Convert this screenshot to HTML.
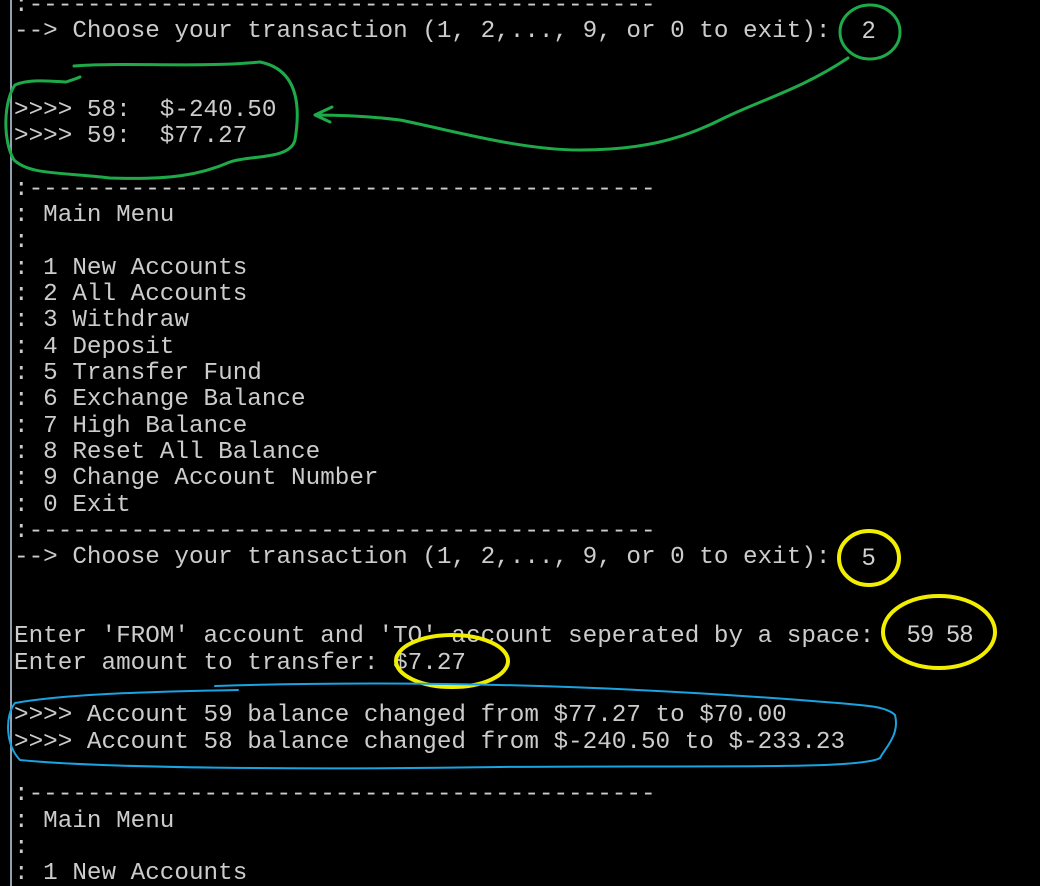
<!DOCTYPE html>
<html><head><meta charset="utf-8"><style>
html,body{margin:0;padding:0;background:#000;width:1040px;height:886px;overflow:hidden;position:relative}
pre{position:absolute;left:14px;top:-7.5px;margin:0;font-family:"Liberation Mono",monospace;font-size:24.3px;line-height:26.33px;color:#cccccc;letter-spacing:0}
.bar{position:absolute;left:10px;top:0;width:2px;height:886px;background:#8fa0b0}
.p{position:absolute;font-family:"Liberation Sans",sans-serif;color:#d0d0d0;font-size:24px;word-spacing:6px}
svg{position:absolute;left:0;top:0}
</style></head><body>
<div class="bar"></div>
<pre>:-------------------------------------------
--&gt; Choose your transaction (1, 2,..., 9, or 0 to exit): 


&gt;&gt;&gt;&gt; 58:  $-240.50
&gt;&gt;&gt;&gt; 59:  $77.27

:-------------------------------------------
: Main Menu
:
: 1 New Accounts
: 2 All Accounts
: 3 Withdraw
: 4 Deposit
: 5 Transfer Fund
: 6 Exchange Balance
: 7 High Balance
: 8 Reset All Balance
: 9 Change Account Number
: 0 Exit
:-------------------------------------------
--&gt; Choose your transaction (1, 2,..., 9, or 0 to exit): 


Enter 'FROM' account and 'TO' account seperated by a space:
Enter amount to transfer: $7.27

&gt;&gt;&gt;&gt; Account 59 balance changed from $77.27 to $70.00
&gt;&gt;&gt;&gt; Account 58 balance changed from $-240.50 to $-233.23

:-------------------------------------------
: Main Menu
:
: 1 New Accounts</pre>
<div class="p" style="left:862px;top:17px">2</div>
<div class="p" style="left:862px;top:544px">5</div>
<div class="p" style="left:907px;top:621px">59 58</div>
<svg width="1040" height="886" fill="none" stroke-linecap="round" stroke-linejoin="round">
<g stroke="#1faa4a" stroke-width="3">
<ellipse cx="870" cy="32" rx="30" ry="27"/>
<path d="M74 66 C120 62 200 68 260 62 C300 70 300 110 295 140 C290 160 250 155 230 162 C200 175 170 180 110 178 C60 172 30 175 14 160 C2 140 4 100 15 85 C30 78 60 82 66 82 C72 80 78 78 80 77"/>
<path d="M848 58 C800 90 760 100 720 120 C680 140 640 150 580 150 C520 150 450 130 400 120 C360 115 330 115 315 115 M315 115 L332 107 M315 115 L330 122"/>
</g>
<g stroke="#f2ee00" stroke-width="4">
<ellipse cx="869" cy="558" rx="30" ry="27"/>
<ellipse cx="939" cy="632" rx="56" ry="36"/>
<ellipse cx="452" cy="661" rx="56" ry="26"/>
</g>
<path stroke="#1aa3e0" stroke-width="2" d="M215 686 C400 680 600 685 800 700 C860 705 885 705 895 715 C900 735 885 748 880 758 C860 770 700 765 500 767 C300 770 100 768 20 760 C5 745 5 715 15 703 C60 695 130 692 238 690"/>
</svg>
</body></html>
